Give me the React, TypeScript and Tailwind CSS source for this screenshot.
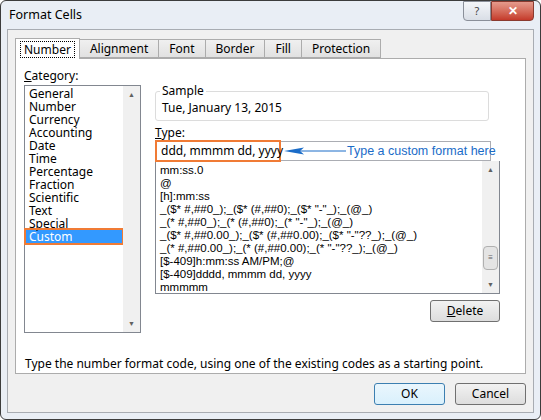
import React from "react";

const cats = ["General","Number","Currency","Accounting","Date","Time","Percentage","Fraction","Scientific","Text","Special","Custom"];
const codes = [
  "mm:ss.0",
  "@",
  "[h]:mm:ss",
  '_($* #,##0_);_($* (#,##0);_($* "-"_);_(@_)',
  '_(* #,##0_);_(* (#,##0);_(* "-"_);_(@_)',
  '_($* #,##0.00_);_($* (#,##0.00);_($* "-"??_);_(@_)',
  '_(* #,##0.00_);_(* (#,##0.00);_(* "-"??_);_(@_)',
  "[$-409]h:mm:ss AM/PM;@",
  "[$-409]dddd, mmmm dd, yyyy",
  "mmmmm",
];
const tabs = ["Number","Alignment","Font","Border","Fill","Protection"];

function ScrollBar({ thumb }: { thumb?: boolean }) {
  return (
    <div className="flex w-[17px] flex-col items-center bg-[#f0f0f0] text-[7px] text-[#606060]">
      <div className="h-[17px] leading-[17px]">▲</div>
      <div className="flex-1 w-full relative">
        {thumb && (
          <div className="absolute bottom-[6px] left-[1px] right-[1px] h-[24px] rounded-sm border border-[#b0b0b0] bg-[#e4e4e4] flex items-center justify-center text-[8px] leading-none">≡</div>
        )}
      </div>
      <div className="h-[17px] leading-[17px]">▼</div>
    </div>
  );
}

export default function App() {
  return (
    <div className="w-[541px] h-[420px] bg-white" style={{ fontFamily: '"Noto Sans", "Open Sans", sans-serif' }}>
      <div className="w-[541px] h-[420px] rounded-[6px] border border-[#3c3c3c] bg-[#e9eef5] flex flex-col px-[6px] pb-[6px]">
        {/* title bar */}
        <div className="h-[28px] flex items-center justify-between text-[12.5px] text-black pl-[2px]">
          <span className="mt-[1px]">Format Cells</span>
          <div className="flex self-start">
            <div className="w-[28px] h-[20px] border border-[#8a8f99] rounded-bl-[4px] bg-gradient-to-b from-[#f4f6f9] to-[#d9dee6] text-[11px] text-[#444] flex items-center justify-center">?</div>
            <div className="w-[43px] h-[20px] border border-[#8a3a2f] rounded-br-[4px] bg-gradient-to-b from-[#e49a8c] to-[#c4392a] text-white text-[12px] font-bold flex items-center justify-center">✕</div>
          </div>
        </div>
        {/* body */}
        <div className="flex-1 bg-[#f0f0f0] border border-[#a8acb2] px-[7px] flex flex-col text-[12px] text-black">
          {/* tabs */}
          <div className="flex mt-[8px] h-[20px] items-end">
            {tabs.map((t, i) => (
              <div
                key={t}
                className={
                  i === 0
                    ? "h-[21px] px-[4px] bg-white border border-b-0 border-[#acacac] flex items-center -mb-[1px] z-10"
                    : "h-[19px] px-[10px] -ml-px first:ml-0 bg-gradient-to-b from-[#f0f0f0] to-[#e1e1e1] border border-[#acacac] flex items-center"
                }
              >
                {i === 0 ? <span className="border border-dotted border-black px-[3px] leading-[15px]">{t}</span> : t}
              </div>
            ))}
          </div>
          {/* panel */}
          <div className="h-[316px] bg-white border border-[#acacac] flex flex-col px-[8px]">
            <div className="flex gap-[14px] mt-[8px]">
              <div className="w-[117px]">
                <div className="leading-[18px]"><u>C</u>ategory:</div>
                <div className="h-[248px] border border-[#828790] flex">
                  <div className="flex-1 pt-[1px]">
                    {cats.map((c) => (
                      <div key={c} className={c === "Custom" ? "mx-[1px] h-[13px] leading-[13px] pl-[3px] bg-[#3399ff] text-white outline outline-2 outline-[#f07b35]" : "h-[13px] leading-[13px] pl-[4px]"}>
                        {c}
                      </div>
                    ))}
                  </div>
                  <ScrollBar />
                </div>
              </div>
              <div className="flex-1 pt-[24px]">
                <div className="relative w-[334px] h-[30px] border border-[#dcdcdc] rounded-[3px]">
                  <span className="absolute -top-[10px] left-[4px] bg-white px-[2px]">Sample</span>
                  <div className="pl-[6px] pt-[9px] leading-[14px]">Tue, January 13, 2015</div>
                </div>
                <div className="mt-[4px] leading-[16px]"><u>T</u>ype:</div>
                <div className="w-[336px] h-[20px] border border-[#abadb3] flex items-center whitespace-nowrap">
                  <div className="w-[126px] shrink-0 h-[22px] -ml-px border-2 border-[#f07b35] flex items-center pl-[4px]">ddd, mmmm dd, yyyy</div>
                  <svg width="62" height="10" className="ml-[3px] shrink-0" viewBox="0 0 62 10">
                    <path d="M62 5H10" stroke="#1a6cc8" strokeWidth="1" />
                    <path d="M0 5L20 1.5 16 5 20 8.5Z" fill="#1a6cc8" />
                  </svg>
                  <span className="text-[#1a6cc8] text-[12.5px] ml-[1px]" style={{ fontFamily: '"Liberation Sans", Arial, sans-serif' }}>Type a custom format here</span>
                </div>
                <div className="w-[345px] h-[133px] border border-[#828790] border-t-0 flex" style={{ fontFamily: '"Liberation Sans", Arial, sans-serif' }}>
                  <div className="flex-1 pl-[4px] pt-[3px] text-[11.5px]">
                    {codes.map((c) => (
                      <div key={c} className="h-[13px] leading-[13px] whitespace-pre">{c}</div>
                    ))}
                  </div>
                  <ScrollBar thumb />
                </div>
                <div className="flex justify-end w-[345px] mt-[6px]">
                  <div className="w-[70px] h-[22px] border border-[#707070] rounded-[3px] bg-gradient-to-b from-[#f2f2f2] to-[#dddddd] flex items-center justify-center"><u>D</u>elete</div>
                </div>
              </div>
            </div>
            <div className="mt-[22px] pl-[1px]">Type the number format code, using one of the existing codes as a starting point.</div>
          </div>
          {/* buttons */}
          <div className="flex justify-end gap-[10px] mt-[9px]">
            <div className="w-[71px] h-[22px] border border-[#3c7fb1] rounded-[3px] bg-gradient-to-b from-[#eaf6fd] to-[#d9f0fc] flex items-center justify-center">OK</div>
            <div className="w-[71px] h-[22px] border border-[#707070] rounded-[3px] bg-gradient-to-b from-[#f2f2f2] to-[#dddddd] flex items-center justify-center">Cancel</div>
          </div>
        </div>
      </div>
    </div>
  );
}
